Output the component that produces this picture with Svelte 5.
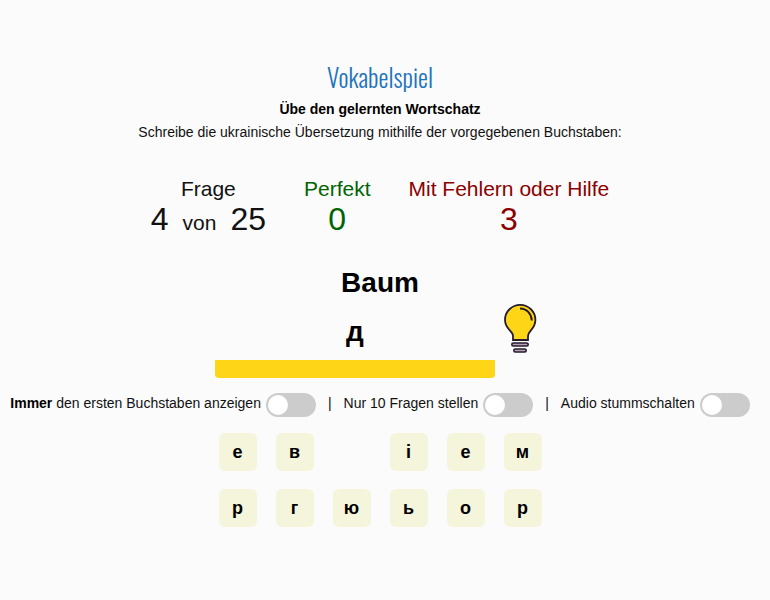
<script>
  let settings = $state([
    { id: 'first', strong: 'Immer', text: ' den ersten Buchstaben anzeigen', on: false },
    { id: 'ten', strong: '', text: 'Nur 10 Fragen stellen', on: false },
    { id: 'mute', strong: '', text: 'Audio stummschalten', on: false }
  ]);
  const letters = ['е', 'в', '', 'і', 'е', 'м', 'р', 'г', 'ю', 'ь', 'о', 'р'];
</script>

<main>
  <h1>Vokabelspiel</h1>
  <p><strong>Übe den gelernten Wortschatz</strong></p>
  <p>Schreibe die ukrainische Übersetzung mithilfe der vorgegebenen Buchstaben:</p>

  <section class="stats">
    <div>
      <span>Frage</span>
      <span class="count"><b>4</b><span>von</span><b>25</b></span>
    </div>
    <div class="perfect"><span>Perfekt</span><b>0</b></div>
    <div class="errors"><span>Mit Fehlern oder Hilfe</span><b>3</b></div>
  </section>

  <section class="question">
    <h2>Baum</h2>
    <div class="answer">
      <output>д</output>
      <button class="hint" aria-label="Hilfe">
        <svg viewBox="0 0 34 50" width="34" height="50" fill="none" stroke="#251c30">
          <path d="M10 37v-4c0-5-8-7-8-16a15.200 15.200 0 0 1 30.400 0c0 9-7.400 11-7.400 16v4z" fill="#ffd617" stroke-width="1.800" />
          <path d="M17 5.500c6.500 0 11.500 5 11.800 12" stroke-width="2" />
          <rect x="8.800" y="40" width="16.400" height="3" rx="1.500" fill="#b9a4b4" stroke-width="1.600" />
          <rect x="10.800" y="46" width="12.400" height="3" rx="1.500" fill="#b9a4b4" stroke-width="1.600" />
        </svg>
      </button>
    </div>
  </section>

  <section class="settings">
    {#each settings as s, i (s.id)}
      {#if i > 0}<span>|</span>{/if}
      <label><span>{#if s.strong}<strong>{s.strong}</strong>{/if}{s.text}</span><input type="checkbox" role="switch" bind:checked={s.on} /></label>
    {/each}
  </section>

  <section class="letters">
    {#each letters as letter}
      {#if letter}<button>{letter}</button>{:else}<span></span>{/if}
    {/each}
  </section>
</main>

<style>
  :global(body) {
    margin: 0;
    background: #fbfbfb;
  }
  main {
    display: flex;
    flex-direction: column;
    align-items: center;
    padding: 56px 10px 40px 0;
    font: 14px/23px "Liberation Sans", Arial, sans-serif;
    color: #111;
  }
  h1, h2, p {
    margin: 0;
  }
  h1 {
    font: 300 25px/42px Oswald, "Liberation Sans Narrow", "Liberation Sans", sans-serif;
    color: #1e73be;
  }
  strong {
    color: #000;
  }
  .stats {
    display: flex;
    gap: 38px;
    margin-top: 33px;
    font-size: 21px;
    line-height: 24px;
  }
  .stats div {
    display: flex;
    flex-direction: column;
    align-items: center;
  }
  .stats b {
    font-size: 32px;
    font-weight: 400;
    line-height: 36px;
  }
  .count {
    display: flex;
    align-items: baseline;
    gap: 14px;
  }
  .perfect {
    color: #006400;
  }
  .errors {
    color: #8b0000;
  }
  .question {
    display: flex;
    flex-direction: column;
    align-items: center;
    margin-top: 26px;
  }
  h2 {
    font-size: 28px;
    line-height: 40px;
    color: #000;
  }
  .answer {
    display: flex;
    align-items: flex-start;
  }
  output {
    width: 280px;
    border-bottom: 18px solid #ffd617;
    border-radius: 4px;
    text-align: center;
    font-weight: 700;
    font-size: 28px;
    line-height: 57px;
    color: #000;
  }
  button {
    border: 0;
    padding: 0;
    cursor: pointer;
  }
  .hint {
    padding: 0 8px;
    background: none;
  }
  svg {
    display: block;
  }
  .settings {
    display: flex;
    align-items: center;
    gap: 12px;
    margin-top: 11px;
    white-space: nowrap;
  }
  label {
    display: flex;
    align-items: center;
    gap: 5px;
  }
  input {
    appearance: none;
    width: 50px;
    height: 24px;
    margin: 4px 0 0;
    padding: 2px;
    box-sizing: border-box;
    border-radius: 12px;
    background: #ccc;
    cursor: pointer;
  }
  input::before {
    content: "";
    display: block;
    width: 20px;
    height: 20px;
    border-radius: 50%;
    background: #fff;
  }
  input:checked {
    background: #1e73be;
  }
  input:checked::before {
    margin-left: auto;
  }
  .letters {
    display: grid;
    grid-template-columns: repeat(6, 38px);
    grid-auto-rows: 38px;
    gap: 18px 19px;
    margin-top: 16px;
  }
  .letters button {
    border-radius: 6px;
    background: #f5f5dc;
    font: 700 18px/38px "Liberation Sans", Arial, sans-serif;
    color: #000;
  }
</style>
